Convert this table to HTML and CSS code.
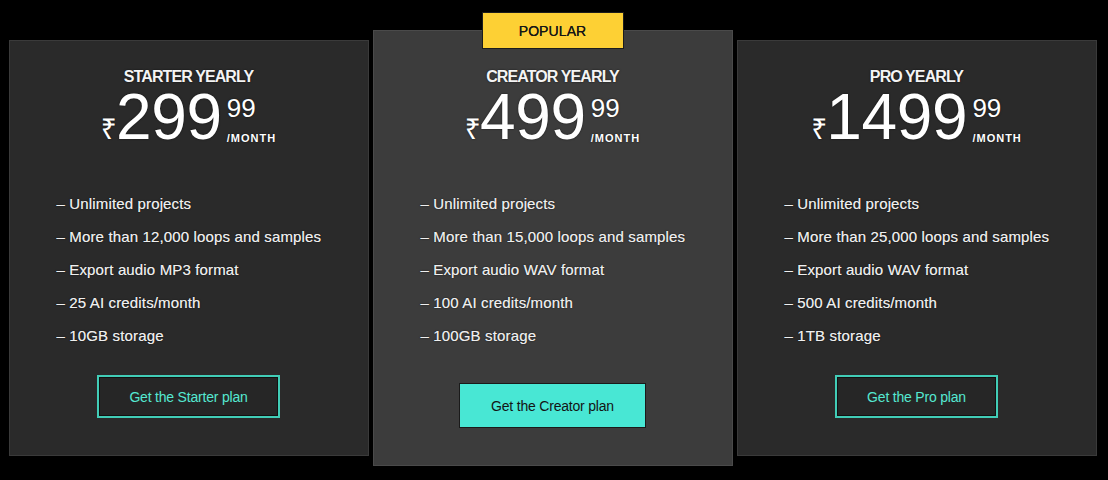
FILE: index.html
```html
<!DOCTYPE html>
<html lang="en">
<head>
<meta charset="utf-8">
<title>Pricing</title>
<link rel="stylesheet" href="styles.css">
</head>
<body>
<main class="plans">
  <section class="card">
    <h2 class="card__title">STARTER YEARLY</h2>
    <div class="price">
      <span class="price__cur">₹</span>
      <span class="price__amount">299</span>
      <span class="price__side">
        <span class="price__cents">99</span>
        <span class="price__per">/MONTH</span>
      </span>
    </div>
    <ul class="features">
      <li>– Unlimited projects</li>
      <li>– More than 12,000 loops and samples</li>
      <li>– Export audio MP3 format</li>
      <li>– 25 AI credits/month</li>
      <li>– 10GB storage</li>
    </ul>
    <a class="btn btn--outline" href="#">Get the Starter plan</a>
  </section>

  <section class="card card--featured">
    <div class="badge">POPULAR</div>
    <h2 class="card__title">CREATOR YEARLY</h2>
    <div class="price">
      <span class="price__cur">₹</span>
      <span class="price__amount">499</span>
      <span class="price__side">
        <span class="price__cents">99</span>
        <span class="price__per">/MONTH</span>
      </span>
    </div>
    <ul class="features">
      <li>– Unlimited projects</li>
      <li>– More than 15,000 loops and samples</li>
      <li>– Export audio WAV format</li>
      <li>– 100 AI credits/month</li>
      <li>– 100GB storage</li>
    </ul>
    <a class="btn btn--solid" href="#">Get the Creator plan</a>
  </section>

  <section class="card">
    <h2 class="card__title">PRO YEARLY</h2>
    <div class="price">
      <span class="price__cur">₹</span>
      <span class="price__amount">1499</span>
      <span class="price__side">
        <span class="price__cents">99</span>
        <span class="price__per">/MONTH</span>
      </span>
    </div>
    <ul class="features">
      <li>– Unlimited projects</li>
      <li>– More than 25,000 loops and samples</li>
      <li>– Export audio WAV format</li>
      <li>– 500 AI credits/month</li>
      <li>– 1TB storage</li>
    </ul>
    <a class="btn btn--outline" href="#">Get the Pro plan</a>
  </section>
</main>
</body>
</html>
```

FILE: styles.css
```css
* { box-sizing: border-box; }

html, body {
  margin: 0;
  padding: 0;
  background: #000;
}

body {
  font-family: "Liberation Sans", Arial, sans-serif;
  color: #ececec;
}

.plans {
  height: 480px;
  display: flex;
  justify-content: center;
  align-items: center;
  gap: 4px;
  padding: 16px 3px 0 0;
}

.card {
  position: relative;
  width: 360px;
  height: 416px;
  background: #2a2a2a;
  border: 1px solid #3a3a3a;
  display: flex;
  flex-direction: column;
  align-items: center;
  padding: 27px 0 37px;
}

.card--featured {
  height: 436px;
  background: #3c3c3c;
  border-color: #4a4a4a;
  padding-top: 37px;
  padding-bottom: 38px;
}

.badge {
  position: absolute;
  top: -19px;
  left: 50%;
  transform: translateX(-50%);
  width: 142px;
  height: 37px;
  background: #fdd034;
  border: 1px solid #1c1c1c;
  color: #161616;
  font-size: 14px;
  letter-spacing: 0.1px;
  text-shadow: 0 0 0.4px #161616;
  display: flex;
  align-items: center;
  justify-content: center;
}

.card__title {
  margin: 0;
  font-size: 16px;
  line-height: 18px;
  font-weight: 700;
  letter-spacing: -0.9px;
  color: #f4f4f4;
  text-shadow: 0 0 2px rgba(0,0,0,0.7);
}

.price {
  display: flex;
  align-items: baseline;
  height: 63px;
  color: #fff;
  text-shadow: 0 0 2px rgba(0,0,0,0.6);
}

.price__cur {
  font-family: "Noto Sans", "DejaVu Sans", sans-serif;
  font-size: 28px;
  line-height: 1;
  margin-right: -1px;
}

.price__amount {
  font-size: 64px;
  line-height: 63px;
  letter-spacing: -0.3px;
}

.price__side {
  align-self: flex-start;
  display: flex;
  flex-direction: column;
  padding-top: 10px;
  margin-left: 5px;
}

.price__cents {
  font-size: 26px;
  line-height: 25px;
}

.price__per {
  margin-top: 12px;
  font-size: 11px;
  line-height: 11px;
  font-weight: 700;
  letter-spacing: 1px;
}

.features {
  list-style: none;
  margin: 38px 0 0;
  padding: 0 0 0 47px;
  align-self: stretch;
  font-size: 15px;
  line-height: 33px;
  letter-spacing: 0.15px;
  color: #efefef;
  text-shadow: 0 0 1.5px rgba(0,0,0,0.8), 0 0 0.3px #efefef;
}

.btn {
  margin-top: auto;
  height: 43px;
  padding: 0 31px;
  display: flex;
  align-items: center;
  justify-content: center;
  font-size: 14px;
  letter-spacing: -0.2px;
  text-decoration: none;
}

.btn--outline {
  border: 2px solid #41cdb7;
  color: #55e8d1;
  background: #262626;
  box-shadow: inset 0 0 0 1px #121212;
  padding: 0 30px;
}

.btn--solid {
  background: #48e7d4;
  color: #141414;
  box-shadow: 0 0 0 1px #1a1a1a;
  padding: 0 31px;
}
```
